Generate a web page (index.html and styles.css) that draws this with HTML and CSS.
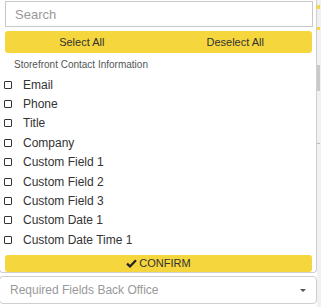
FILE: index.html
```html
<!DOCTYPE html>
<html lang="en">
<head>
    <meta charset="UTF-8">
    <meta name="viewport" content="width=device-width, initial-scale=1.0">
    <title>Required Fields</title>
    <link rel="stylesheet" href="styles.css">
</head>
<body>
    <div class="page">
        <div class="field">
            <div class="dropdown">
                <input class="search" type="text" placeholder="Search">

                <div class="actions">
                    <button class="action-btn">Select All</button>
                    <button class="action-btn">Deselect All</button>
                </div>

                <div class="group-title">Storefront Contact Information</div>

                <ul class="options">
                    <li><span class="box"></span>Email</li>
                    <li><span class="box"></span>Phone</li>
                    <li><span class="box"></span>Title</li>
                    <li><span class="box"></span>Company</li>
                    <li><span class="box"></span>Custom Field 1</li>
                    <li><span class="box"></span>Custom Field 2</li>
                    <li><span class="box"></span>Custom Field 3</li>
                    <li><span class="box"></span>Custom Date 1</li>
                    <li><span class="box"></span>Custom Date Time 1</li>
                </ul>

                <button class="confirm-btn">
                    <svg width="11" height="9" viewBox="0 0 11 9"><path d="M1 4.6 L4 7.4 L10 1.2" fill="none" stroke="#222" stroke-width="2.2"/></svg>
                    CONFIRM
                </button>
            </div>

            <div class="select">
                <span>Required Fields Back Office</span>
                <span class="caret"></span>
            </div>
        </div>

        <div class="side">
            <div class="side-mark top"></div>
            <div class="side-mark second"></div>
            <div class="thumb"></div>
            <div class="tick"></div>
        </div>
    </div>
</body>
</html>
```
FILE: styles.css
```css
* {
    margin: 0;
    padding: 0;
    box-sizing: border-box;
}

body {
    font-family: 'Liberation Sans', Arial, sans-serif;
    background: white;
    color: #333;
}

.page {
    display: flex;
    width: 321px;
    height: 307px;
    overflow: hidden;
}

.field {
    width: 318px;
    flex-shrink: 0;
    margin-left: -1px;
}

.dropdown {
    height: 273px;
    border: 1px solid #cfcfcf;
    border-top: none;
    border-radius: 0 0 4px 4px;
    padding: 1px 5px 0 5px;
    display: flex;
    flex-direction: column;
}

.search {
    width: 308px;
    height: 26px;
    border: 1px solid #c8c8c8;
    padding: 0 9px;
    font-family: inherit;
    font-size: 13px;
    color: #333;
    outline: none;
}

.search::placeholder {
    color: #999;
}

.actions {
    display: flex;
    margin-top: 4px;
    width: 307px;
    height: 22px;
    background: #f5d63d;
    border-radius: 3px;
}

.action-btn {
    flex: 1;
    border: none;
    background: none;
    font-family: inherit;
    font-size: 11px;
    color: #333;
    cursor: pointer;
}

.group-title {
    font-size: 10px;
    color: #555;
    margin: 5px 0 0 9px;
    height: 13px;
    line-height: 13px;
}

.options {
    list-style: none;
    margin: 4px 0 0 -5px;
}

.options li {
    display: flex;
    align-items: center;
    height: 19.4px;
    font-size: 12px;
    color: #333;
}

.box {
    width: 8px;
    height: 8px;
    border: 1px solid #333;
    border-radius: 1px;
    margin: 0 11px 0 4px;
}

.confirm-btn {
    margin-top: 5px;
    width: 307px;
    height: 17px;
    border: none;
    border-radius: 3px;
    background: #f5d63d;
    font-family: inherit;
    font-size: 11px;
    color: #333;
    display: flex;
    align-items: center;
    justify-content: center;
    gap: 2px;
    cursor: pointer;
}

.select {
    margin-top: 3px;
    height: 28px;
    border: 1px solid #cfcfcf;
    border-radius: 4px;
    display: flex;
    align-items: center;
    justify-content: space-between;
    padding: 0 10px 0 10px;
    font-size: 12px;
    color: #999;
}

.caret {
    width: 0;
    height: 0;
    border-left: 3px solid transparent;
    border-right: 3px solid transparent;
    border-top: 3px solid #555;
}

.side {
    position: relative;
    flex: 1;
    background: #f1f1f4;
}

.side-mark {
    position: absolute;
    left: 0;
    width: 3px;
    background: #f5d63d;
}

.side-mark.top {
    top: 5px;
    height: 4px;
}

.side-mark.second {
    top: 27px;
    height: 3px;
}

.thumb {
    position: absolute;
    top: 65px;
    left: 0;
    width: 3px;
    height: 26px;
    background: #c9c9c9;
}

.tick {
    position: absolute;
    top: 143px;
    left: 0;
    width: 3px;
    height: 1px;
    background: #bbb;
}
```
